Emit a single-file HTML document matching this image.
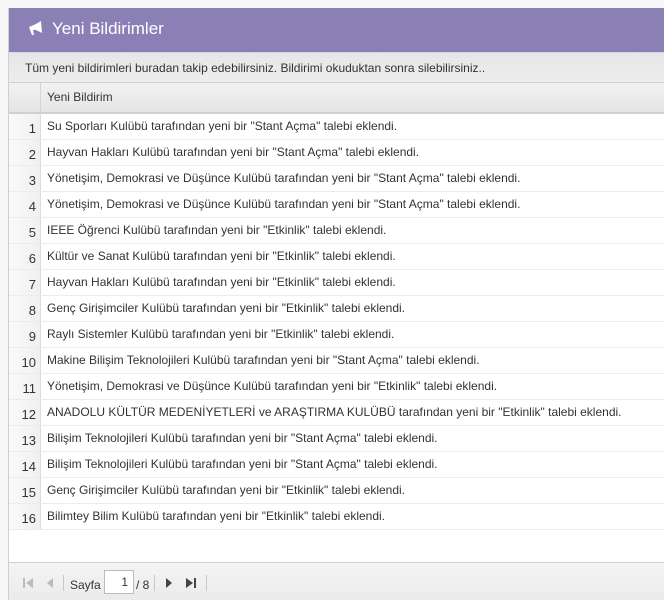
<!DOCTYPE html>
<html><head><style>
body{margin:0;width:664px;height:600px;overflow:hidden;background:#f6f6f6;font-family:"Liberation Sans",Arial,sans-serif;position:relative}
.p{position:absolute;left:8px;top:8px;width:680px;height:592px;overflow:hidden;background:#fff;border-left:1px solid #d0d0d0}
.h{height:44px;background:#8b80b5;color:#fff;font-size:17px;line-height:42px;padding-left:43px;position:relative;border-bottom:1px solid #d8d8e0}
.h svg{position:absolute;left:18px;top:13px}
.d{height:29px;background:linear-gradient(#e6e6e6,#ededed);border-bottom:1px solid #cfcfcf;font-size:12px;color:#333;line-height:30px;padding-left:16px}
.c{height:29px;background:linear-gradient(#f2f2f2,#e5e5e5);border-bottom:2px solid #d0d0d0;font-size:12px;color:#333;line-height:28px;display:flex}
.c .n{width:31px;border-right:1px solid #d4d4d4}
.c .t{padding-left:6px}
.r{height:25px;border-bottom:1px solid #ececec;display:flex;font-size:12px;color:#333;line-height:24px}
.r .n{width:27px;padding-right:4px;text-align:right;background:linear-gradient(90deg,#fafafa,#f0f0f0);border-right:1px solid #ddd;color:#333;font-size:13px;line-height:29px}
.r .t{padding-left:6px;white-space:nowrap}
.f{position:absolute;left:0;top:554px;width:680px;height:46px;background:linear-gradient(#f4f4f4,#e9e9e9);border-top:1px solid #d0d0d0;font-size:12px;color:#333}
.f span{position:absolute}
.sep{width:1px;height:16px;background:#c8c8c8;top:12px}
</style></head><body>
<div class="p">
<div class="h"><svg width="18" height="16" viewBox="0 0 18 16"><path d="M2 6 L9 3 L14 0 L15 12 L9 9 L6 9 L7 14 L5 14 L3 9 Z" fill="#fff"/></svg>Yeni Bildirimler</div>
<div class="d">Tüm yeni bildirimleri buradan takip edebilirsiniz. Bildirimi okuduktan sonra silebilirsiniz..</div>
<div class="c"><div class="n"></div><div class="t">Yeni Bildirim</div></div>
<div class="r"><div class="n">1</div><div class="t">Su Sporları Kulübü tarafından yeni bir "Stant Açma" talebi eklendi.</div></div>
<div class="r"><div class="n">2</div><div class="t">Hayvan Hakları Kulübü tarafından yeni bir "Stant Açma" talebi eklendi.</div></div>
<div class="r"><div class="n">3</div><div class="t">Yönetişim, Demokrasi ve Düşünce Kulübü tarafından yeni bir "Stant Açma" talebi eklendi.</div></div>
<div class="r"><div class="n">4</div><div class="t">Yönetişim, Demokrasi ve Düşünce Kulübü tarafından yeni bir "Stant Açma" talebi eklendi.</div></div>
<div class="r"><div class="n">5</div><div class="t">IEEE Öğrenci Kulübü tarafından yeni bir "Etkinlik" talebi eklendi.</div></div>
<div class="r"><div class="n">6</div><div class="t">Kültür ve Sanat Kulübü tarafından yeni bir "Etkinlik" talebi eklendi.</div></div>
<div class="r"><div class="n">7</div><div class="t">Hayvan Hakları Kulübü tarafından yeni bir "Etkinlik" talebi eklendi.</div></div>
<div class="r"><div class="n">8</div><div class="t">Genç Girişimciler Kulübü tarafından yeni bir "Etkinlik" talebi eklendi.</div></div>
<div class="r"><div class="n">9</div><div class="t">Raylı Sistemler Kulübü tarafından yeni bir "Etkinlik" talebi eklendi.</div></div>
<div class="r"><div class="n">10</div><div class="t">Makine Bilişim Teknolojileri Kulübü tarafından yeni bir "Stant Açma" talebi eklendi.</div></div>
<div class="r"><div class="n">11</div><div class="t">Yönetişim, Demokrasi ve Düşünce Kulübü tarafından yeni bir "Etkinlik" talebi eklendi.</div></div>
<div class="r"><div class="n">12</div><div class="t">ANADOLU KÜLTÜR MEDENİYETLERİ ve ARAŞTIRMA KULÜBÜ tarafından yeni bir "Etkinlik" talebi eklendi.</div></div>
<div class="r"><div class="n">13</div><div class="t">Bilişim Teknolojileri Kulübü tarafından yeni bir "Stant Açma" talebi eklendi.</div></div>
<div class="r"><div class="n">14</div><div class="t">Bilişim Teknolojileri Kulübü tarafından yeni bir "Stant Açma" talebi eklendi.</div></div>
<div class="r"><div class="n">15</div><div class="t">Genç Girişimciler Kulübü tarafından yeni bir "Etkinlik" talebi eklendi.</div></div>
<div class="r"><div class="n">16</div><div class="t">Bilimtey Bilim Kulübü tarafından yeni bir "Etkinlik" talebi eklendi.</div></div>
<div class="f">
<svg style="position:absolute;left:14px;top:14px" width="12" height="12"><rect x="0" y="1" width="2" height="10" fill="#bbb"/><path d="M10 1 L3 6 L10 11 Z" fill="#bbb"/></svg>
<svg style="position:absolute;left:36px;top:14px" width="10" height="12"><path d="M8 1 L2 6 L8 11 Z" fill="#bbb"/></svg>
<span class="sep" style="left:54px"></span>
<span style="left:61px;top:15px">Sayfa</span>
<span style="left:95px;top:7px;background:#fff;border:1px solid #bbb;text-align:right;line-height:22px;box-sizing:border-box;padding-right:5px;width:30px;height:24px">1</span>
<span style="left:127px;top:15px">/ 8</span>
<span class="sep" style="left:145px"></span>
<svg style="position:absolute;left:155px;top:14px" width="10" height="12"><path d="M2 1 L8 6 L2 11 Z" fill="#444"/></svg>
<svg style="position:absolute;left:176px;top:14px" width="12" height="12"><path d="M1 1 L8 6 L1 11 Z" fill="#444"/><rect x="9" y="1" width="2" height="10" fill="#444"/></svg>
<span class="sep" style="left:197px"></span>
</div>
</div>
</body></html>
